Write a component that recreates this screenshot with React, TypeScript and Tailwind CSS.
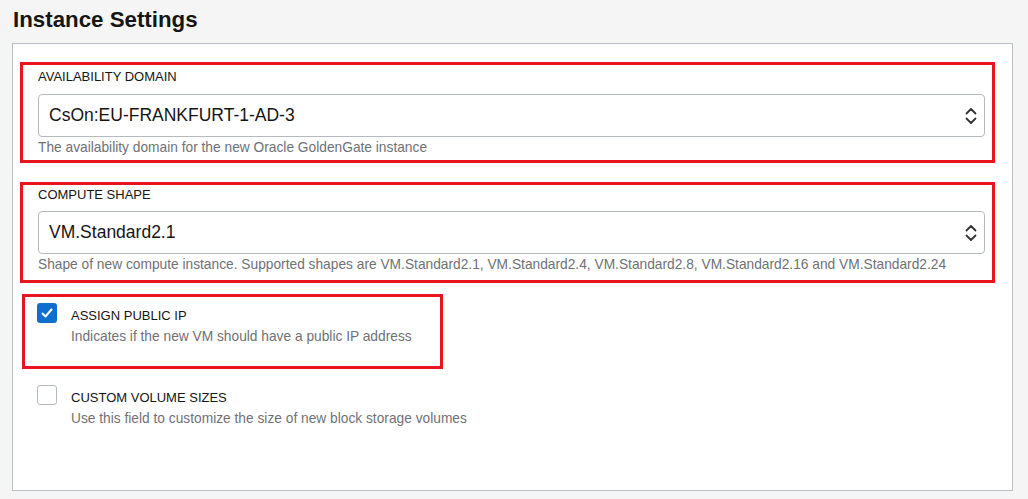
const Chevrons = () => (
  <svg className="w-[12px] h-[18px]" viewBox="0 0 12 18" fill="none" stroke="#333333" strokeWidth="1.8" strokeLinecap="round" strokeLinejoin="round">
    <path d="M1.5 6.5L6 2L10.5 6.5" />
    <path d="M1.5 11.5L6 16L10.5 11.5" />
  </svg>
);

const SelectBox = ({ value }: { value: string }) => (
  <div className="flex items-center justify-between h-[43px] pl-[10px] pr-[7px] border border-[#b5b9c0] rounded-[4px] bg-white">
    <span className="text-[17.5px] text-[#161513]">{value}</span>
    <Chevrons />
  </div>
);

const Checkbox = ({ checked }: { checked: boolean }) =>
  checked ? (
    <div className="w-[20px] h-[20px] shrink-0 rounded-[3px] bg-[#0f6fcf] flex items-center justify-center">
      <svg className="w-[14px] h-[14px]" viewBox="0 0 14 14" fill="none" stroke="white" strokeWidth="2" strokeLinecap="round" strokeLinejoin="round">
        <path d="M2.5 7.5L5.5 10.5L11.5 3.5" />
      </svg>
    </div>
  ) : (
    <div className="w-[20px] h-[20px] shrink-0 rounded-[3px] border border-[#b5b9c0] bg-white" />
  );

const CheckRow = ({ checked, label, desc }: { checked: boolean; label: string; desc: string }) => (
  <div className="flex gap-[14px]">
    <Checkbox checked={checked} />
    <div className="flex flex-col mt-[3px]">
      <span className="text-[13px] leading-[20px] text-[#161513]">{label}</span>
      <span className="text-[13.75px] leading-[20px] text-[#6f7176] mt-[1px]">{desc}</span>
    </div>
  </div>
);

export default function App() {
  return (
    <div className="min-h-screen bg-[#f5f5f5] px-[12px] font-['Liberation_Sans',Arial,sans-serif]">
      <h1 className="text-[22.3px] font-bold leading-[40px] text-[#161513] pl-px">Instance Settings</h1>
      <div className="mt-[3px] w-[1001px] h-[448px] bg-white border border-[#b9bdc4] pt-[18px] pl-[7px]">
        <div className="w-[975px] border-[3px] border-[#e8151f] pt-[4px] pb-[4px] pl-[15px] pr-[7px]">
          <div className="text-[13px] leading-[16px] text-[#161513]">AVAILABILITY DOMAIN</div>
          <div className="mt-[9px]">
            <SelectBox value="CsOn:EU-FRANKFURT-1-AD-3" />
          </div>
          <div className="mt-[3px] text-[13.75px] leading-[16px] text-[#6f7176]">
            The availability domain for the new Oracle GoldenGate instance
          </div>
        </div>
        <div className="mt-[19px] w-[975px] h-[101px] border-[3px] border-[#e8151f] pt-[2px] pl-[15px] pr-[7px]">
          <div className="text-[13px] leading-[16px] text-[#161513]">COMPUTE SHAPE</div>
          <div className="mt-[8px]">
            <SelectBox value="VM.Standard2.1" />
          </div>
          <div className="mt-[3px] text-[13.75px] leading-[16px] text-[#6f7176]">
            Shape of new compute instance. Supported shapes are VM.Standard2.1, VM.Standard2.4, VM.Standard2.8, VM.Standard2.16 and VM.Standard2.24
          </div>
        </div>
        <div className="mt-[11px] ml-[2px] w-[421px] h-[75px] border-[3px] border-[#e8151f] pt-[6px] pl-[12px]">
          <CheckRow checked label="ASSIGN PUBLIC IP" desc="Indicates if the new VM should have a public IP address" />
        </div>
        <div className="mt-[16px] pl-[17px]">
          <CheckRow checked={false} label="CUSTOM VOLUME SIZES" desc="Use this field to customize the size of new block storage volumes" />
        </div>
      </div>
    </div>
  );
}
